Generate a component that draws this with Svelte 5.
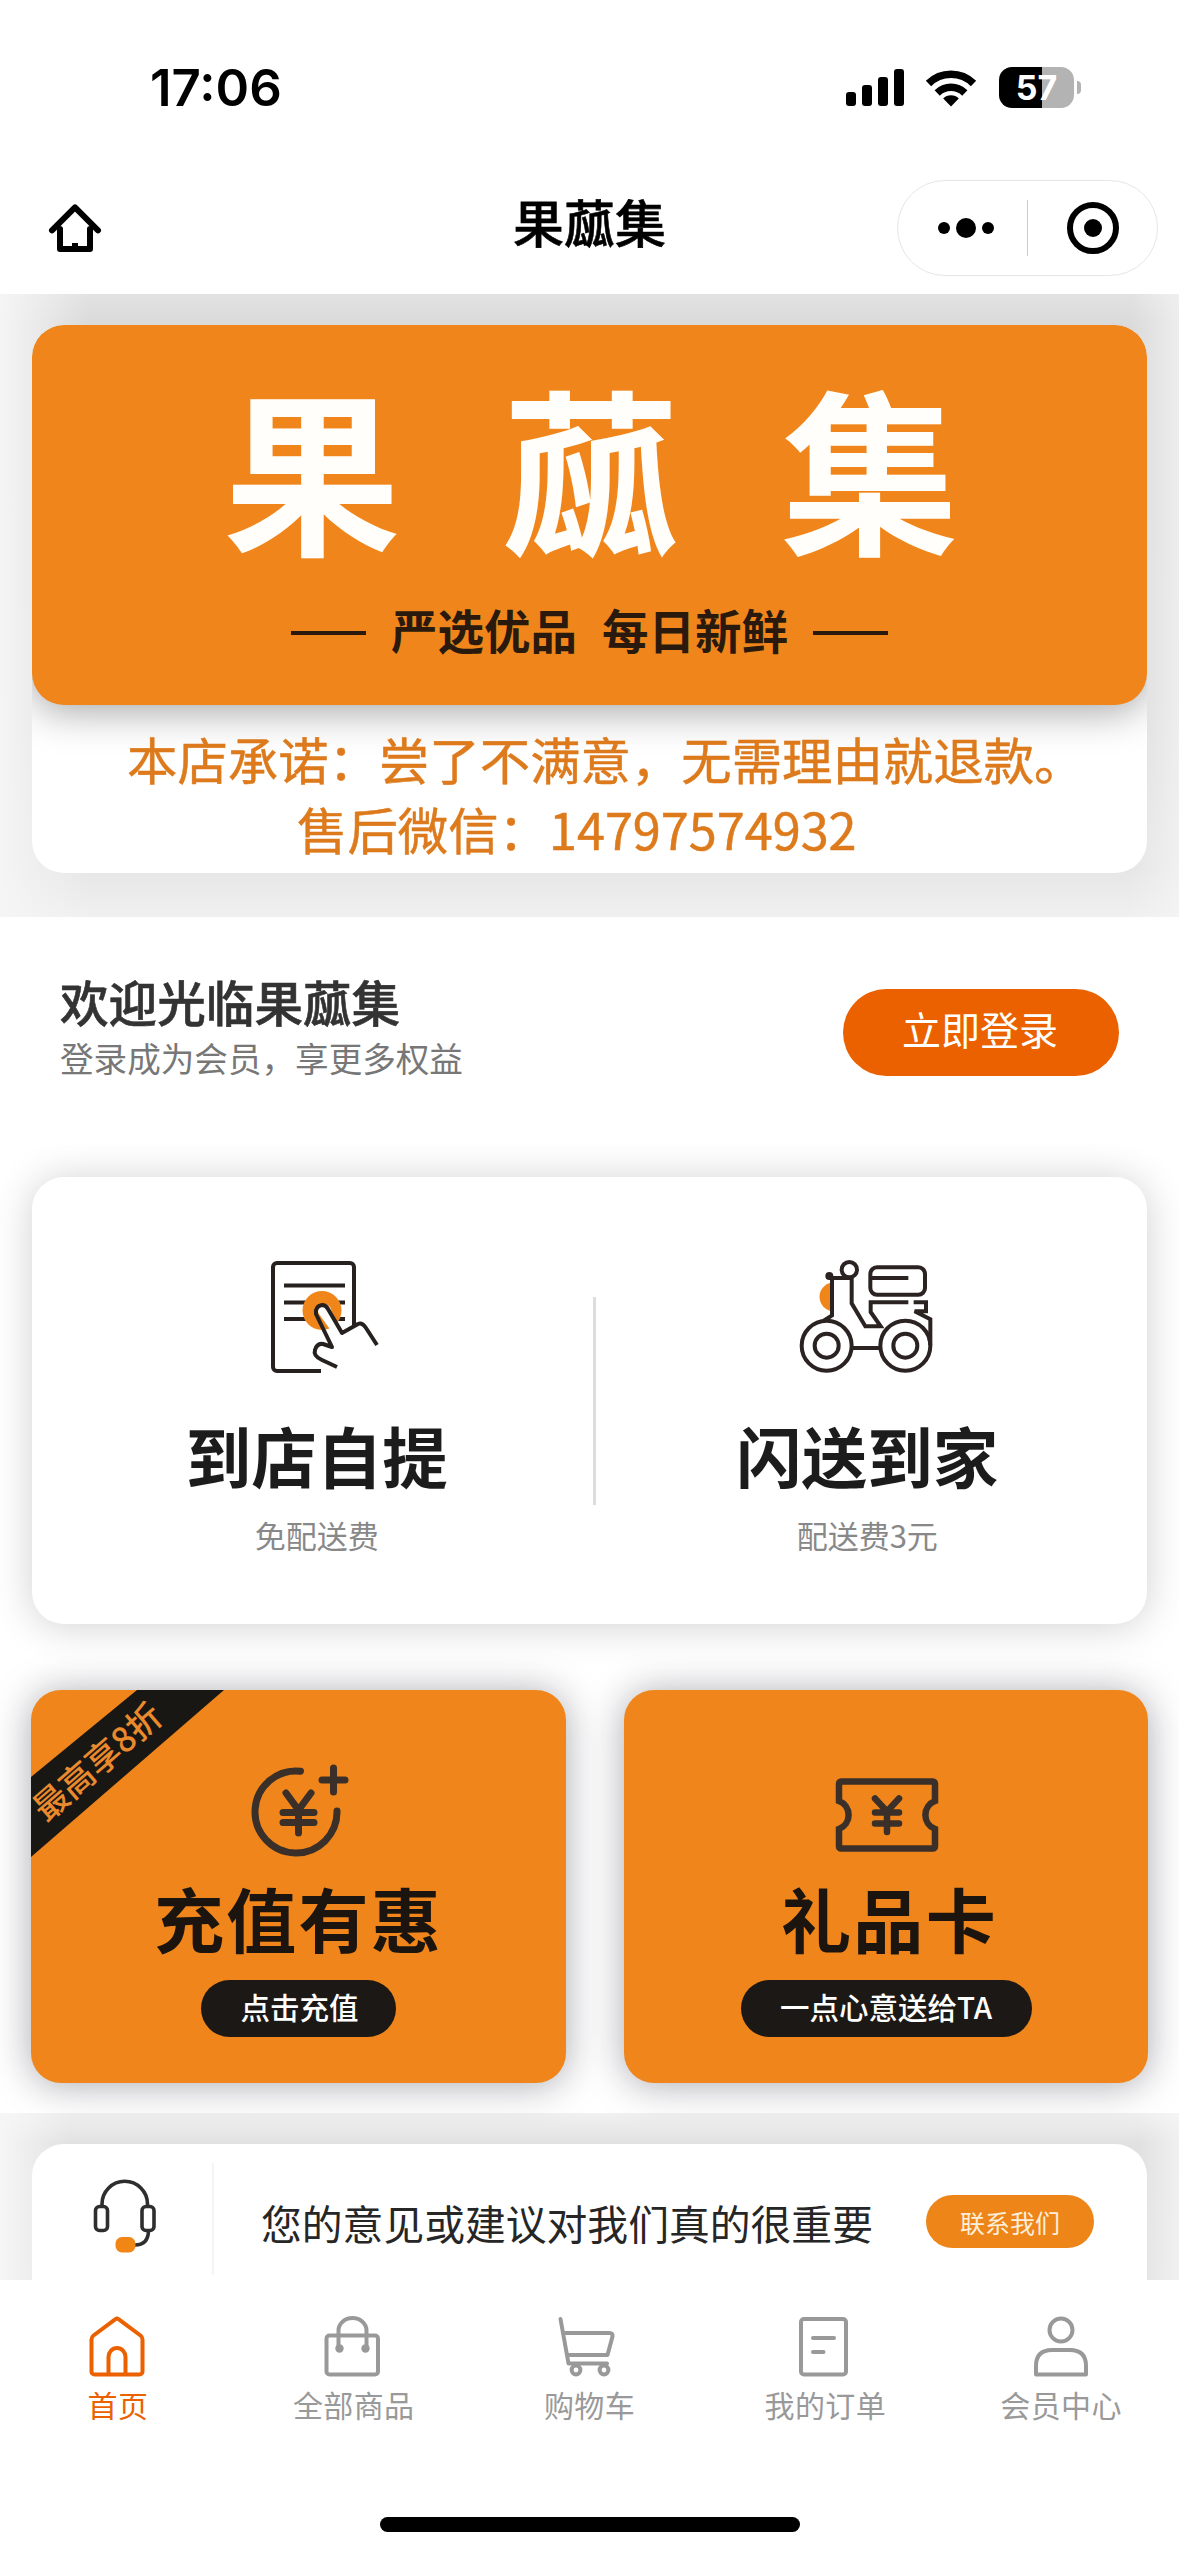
<script>
  const bars = [14, 21, 29, 37];

  const tabs = [
    { id: 'home', label: '首页' },
    { id: 'goods', label: '全部商品' },
    { id: 'cart', label: '购物车' },
    { id: 'orders', label: '我的订单' },
    { id: 'member', label: '会员中心' },
  ];

  let active = 'home';
</script>

<div class="page">
  <header class="status">
    <span class="time">17:06</span>
    <div class="signal">
      {#each bars as height}
        <i style="height: {height}px"></i>
      {/each}
    </div>
    <svg class="wifi" width="52" height="38" viewBox="0 0 52 38">
      <path d="M3.5 14.5a32 32 0 0 1 45 0" fill="none" stroke="#000" stroke-width="7.6" />
      <path d="M12.2 24a19.6 19.6 0 0 1 27.6 0" fill="none" stroke="#000" stroke-width="7.4" />
      <path d="M18.2 29.6a11 11 0 0 1 15.6 0L26 37.5z" />
    </svg>
    <div class="battery"><span>57</span></div>
    <i class="nub"></i>
  </header>

  <nav class="navbar">
    <button class="back" aria-label="home">
      <svg width="80" height="76" viewBox="0 0 240 228">
        <path
          d="M51 121L120 52L189 121M75 117V177H165V117"
          fill="none"
          stroke="#000"
          stroke-width="18"
          stroke-linecap="round"
          stroke-linejoin="round" />
        <path d="M66 114h18v12h-18zM156 114h18v12h-18zM111 159h18v14h-18z" />
      </svg>
    </button>
    <h1>果蓏集</h1>
    <div class="capsule">
      <div class="dots"><i></i><i class="big"></i><i></i></div>
      <span class="rule"></span>
      <div class="target"><i></i></div>
    </div>
  </nav>

  <main>
    <section class="banner">
      <div class="promise-card">
        <div class="brand-card">
          <div class="brand"><span>果</span><span>蓏</span><span>集</span></div>
          <div class="slogan">
            <i></i><span>严选优品</span><span>每日新鲜</span><i></i>
          </div>
        </div>
        <p class="promise">本店承诺：尝了不满意，无需理由就退款。</p>
        <p class="promise wechat">售后微信：14797574932</p>
      </div>
    </section>

    <section class="welcome">
      <div>
        <h2>欢迎光临果蓏集</h2>
        <p>登录成为会员，享更多权益</p>
      </div>
      <button class="login">立即登录</button>
    </section>

    <section class="services-wrap">
      <div class="services">
        <div class="service">
          <svg width="160" height="140" viewBox="0 0 160 140">
            <g fill="none" stroke="#26211f" stroke-width="4">
              <path d="M118 78V17a4 4 0 0 0-4-4H41a4 4 0 0 0-4 4V117a4 4 0 0 0 4 4H85" />
              <path d="M48 35.5H109M48 52.5H109M48 69H109" />
            </g>
            <circle cx="86" cy="60.5" r="19.5" fill="#f0861a" />
            <path
              d="M96 82L83 64a6.5 6.5 0 0 1 11-7L105 83L121 74Q127 71 131 77L141 96V118H101L86 112Q74 96 86 94H96z"
              fill="#fff" />
            <path
              d="M101 117L86 110Q77 106 79 100Q81 93 87 94L96 97L80 64Q79 56 86 55Q90 55 92 59L106 83L122 74Q126 72 130 78L141 95"
              fill="none"
              stroke="#26211f"
              stroke-width="4"
              stroke-linejoin="round" />
          </svg>
          <strong>到店自提</strong>
          <small>免配送费</small>
        </div>
        <i class="split"></i>
        <div class="service delivery">
          <svg width="160" height="140" viewBox="0 0 480 420">
            <path d="M128 98A43 43 0 0 0 128 183z" fill="#f0861a" />
            <g fill="none" stroke="#2b2321" stroke-width="12">
              <circle cx="113" cy="287" r="75" />
              <circle cx="113" cy="287" r="36" />
              <circle cx="349" cy="287" r="75" />
              <circle cx="349" cy="287" r="36" />
              <circle cx="181" cy="59" r="23" />
              <path d="M120 84H188V160L229 229H275L245 186V157H358M129 84V196L103 213M188 294H274" />
              <rect x="244" y="52" width="164" height="82" rx="20" />
              <path d="M244 84H358M374 157H411V184H377L424 208V285L420 250" />
            </g>
            <circle cx="121" cy="78" r="12" fill="#2b2321" />
          </svg>
          <strong>闪送到家</strong>
          <small>配送费3元</small>
        </div>
      </div>
    </section>

    <section class="promos">
      <div class="promo recharge">
        <div class="ribbon"><span>最高享8折</span></div>
        <svg width="80" height="80" viewBox="0 0 80 80">
          <g fill="none" stroke="#3a3029" stroke-linecap="round">
            <path d="M45.5 15.2A41 41 0 1 0 82 55" stroke-width="7" />
            <path d="M31 37L43.5 54L56 37M43.5 54V77M28 56.5H59M28 66.5H59" stroke-width="7" />
            <path d="M78.5 12V36M67 24H90" stroke-width="7" />
          </g>
        </svg>
        <strong>充值有惠</strong>
        <span class="pill">点击充值</span>
      </div>
      <div class="promo gift">
        <svg width="102" height="74" viewBox="0 0 102 74">
          <g fill="none" stroke="#3a3029" stroke-width="6.5">
            <path
              d="M5 3.5H97a2 2 0 0 1 2 2V23A15 15 0 0 0 99 51V68.5a2 2 0 0 1-2 2H5a2 2 0 0 1-2-2V51A15 15 0 0 0 3 23V5.5a2 2 0 0 1 2-2z" />
            <path d="M39 20.5L51 33.5L63 20.5M51 33.5V54M39 34.5H63M39 45.5H63" stroke-linecap="round" stroke-width="6.5" />
          </g>
        </svg>
        <strong>礼品卡</strong>
        <span class="pill">一点心意送给TA</span>
      </div>
    </section>

    <section class="feedback-wrap">
      <div class="feedback">
        <div class="headset">
          <svg width="66" height="76" viewBox="0 0 66 76">
            <g fill="none" stroke="#2e2e2e" stroke-width="3.6">
              <path d="M10 27V24A22.5 22.5 0 0 1 55.5 24V27" />
              <rect x="3.5" y="26.5" width="12" height="24" rx="4" />
              <rect x="50" y="26.5" width="12" height="24" rx="4" />
              <path d="M56.5 51Q56 65 43 65" />
            </g>
            <rect x="23.5" y="57" width="20" height="15.5" rx="6.5" fill="#f28614" />
          </svg>
        </div>
        <p>您的意见或建议对我们真的很重要</p>
        <button>联系我们</button>
      </div>
    </section>
  </main>

  <footer class="tabbar">
    <div class="tabs">
      {#each tabs as tab}
        <button class="tab" class:active={active === tab.id} on:click={() => (active = tab.id)}>
          <svg width="66" height="64" viewBox="0 0 66 64">
            {#if tab.id === 'home'}
              <path d="M7.5 24.5Q7.5 22 9.5 20.5L31.5 4.2Q33 3 34.5 4.2L56.5 20.5Q58.5 22 58.5 24.5V56.5a3 3 0 0 1-3 3H10.500a3 3 0 0 1-3-3z" />
              <path d="M24.5 59V42a8.5 9 0 0 1 17 0V59" />
            {:else if tab.id === 'goods'}
              <rect x="6.5" y="20.5" width="51.5" height="39" rx="3" />
              <path d="M18.5 33V15.500a14 12.500 0 0 1 28 0V33" />
              <circle class="solid" cx="19.5" cy="33.5" r="4.2" />
              <circle class="solid" cx="45.5" cy="33.5" r="4.2" />
            {:else if tab.id === 'cart'}
              <path d="M5.5 4L13.5 48.5H52M9.5 18H54.5Q58 18 57.5 21.5L52.5 40H13.5" />
              <circle cx="21" cy="55" r="4.4" />
              <circle cx="49" cy="55" r="4.4" />
            {:else if tab.id === 'orders'}
              <rect x="10" y="4" width="45" height="55.5" rx="3" />
              <path d="M22 23H43M22 37H32.5" />
            {:else}
              <circle cx="34" cy="15" r="11.5" />
              <path d="M9 59.5V51Q9 35 25 35H43Q59 35 59 51V59.5z" />
            {/if}
          </svg>
          <span>{tab.label}</span>
        </button>
      {/each}
    </div>
    <i class="indicator"></i>
  </footer>
</div>

<style>
  :global(body) {
    background: #fff;
  }
  .page {
    width: 1179px;
    height: 2556px;
    overflow: hidden;
    background: #fff;
    color: #000;
    font-family: 'Noto Sans CJK SC', 'Noto Sans', sans-serif;
  }
  button {
    padding: 0;
    border: none;
    background: none;
    font-family: inherit;
  }
  h1,
  h2,
  p {
    margin: 0;
    font-weight: 400;
  }
  i {
    display: block;
  }
  svg {
    display: block;
    overflow: visible;
  }

  .status {
    display: flex;
    align-items: center;
    height: 175px;
    padding-left: 150px;
  }
  .time {
    width: 696px;
    font: 600 51px/60px Inter, sans-serif;
  }
  .signal {
    display: flex;
    align-items: flex-end;
    gap: 6px;
    height: 37px;
  }
  .signal i {
    width: 10px;
    border-radius: 3px;
    background: #000;
  }
  .wifi {
    margin-left: 21px;
  }
  .battery {
    width: 75px;
    height: 41px;
    margin-left: 22px;
    border-radius: 13px;
    background: linear-gradient(to right, #000 43px, #b3b3b3 43px);
    color: #fff;
    font: 700 34px/41px Inter, sans-serif;
    text-align: center;
  }
  .nub {
    width: 4px;
    height: 13px;
    margin-left: 3px;
    border-radius: 0 5px 5px 0;
    background: #b3b3b3;
  }

  .navbar {
    display: grid;
    grid-template-columns: 1fr auto 1fr;
    height: 119px;
    padding: 0 21px;
    box-sizing: border-box;
  }
  .back {
    width: 80px;
    height: 76px;
    margin: 15px 0 0 14px;
  }
  .navbar h1 {
    font-size: 51px;
    font-weight: 500;
    line-height: 93px;
    -webkit-text-stroke: 0.6px currentColor;
  }
  .capsule {
    display: flex;
    justify-self: end;
    align-items: center;
    width: 261px;
    height: 96px;
    margin-top: 5px;
    border: 1px solid #e6e6e6;
    border-radius: 48px;
    box-sizing: border-box;
  }
  .dots {
    display: flex;
    align-items: center;
    gap: 6px;
    margin-left: 40px;
  }
  .dots i {
    width: 12px;
    height: 12px;
    border-radius: 50%;
    background: #000;
  }
  .dots .big {
    width: 20px;
    height: 20px;
  }
  .rule {
    width: 1px;
    height: 56px;
    margin: 0 39px 0 33px;
    background: #ccc;
  }
  .target {
    display: grid;
    place-items: center;
    width: 40px;
    height: 40px;
    border: 6px solid #000;
    border-radius: 50%;
  }
  .target i {
    width: 18px;
    height: 18px;
    border-radius: 50%;
    background: #000;
  }

  main {
    height: 1986px;
    overflow: hidden;
  }

  .banner {
    height: 623px;
    padding: 31px 32px 0;
    box-sizing: border-box;
    background:
      linear-gradient(to right, #f5f5f5, rgba(245, 245, 245, 0) 90px, rgba(245, 245, 245, 0) 1130px, rgba(245, 245, 245, 0.7)),
      linear-gradient(#e2e2e2, #dadada 30px, #dcdcdc 400px, #e6e6e6 575px, #f0f0f0);
  }
  .promise-card {
    height: 548px;
    border-radius: 32px;
    background: #fff;
    overflow: hidden;
  }
  .brand-card {
    height: 380px;
    padding-top: 40px;
    margin-bottom: 19px;
    border-radius: 32px;
    box-sizing: border-box;
    background: #f0861b;
    box-shadow: 0 6px 40px rgba(0, 0, 0, 0.36);
  }
  .brand {
    display: flex;
    justify-content: center;
    gap: 102px;
    height: 200px;
    padding-left: 3px;
    color: #fffefa;
    font-size: 177px;
    font-weight: 700;
    line-height: 200px;
  }
  .slogan {
    display: flex;
    align-items: center;
    justify-content: center;
    gap: 25px;
    height: 60px;
    margin-top: 34px;
    color: #2a1a0e;
    font-size: 46.5px;
    font-weight: 700;
    line-height: 60px;
  }
  .slogan i {
    width: 75px;
    height: 4px;
    margin-top: 7px;
    background: #2a1a0e;
  }
  .promise {
    margin-left: 95px;
    color: #dd7a1c;
    font-size: 50.4px;
    line-height: 70px;
    white-space: nowrap;
    -webkit-text-stroke: 0.5px currentColor;
  }
  .wechat {
    margin-left: 265px;
  }

  .welcome {
    display: flex;
    justify-content: space-between;
    height: 228px;
    padding: 0 60px;
    box-sizing: border-box;
  }
  .welcome h2 {
    margin-top: 52px;
    color: #333;
    font-size: 48.6px;
    font-weight: 500;
    line-height: 64px;
    -webkit-text-stroke: 0.6px currentColor;
  }
  .welcome p {
    margin-top: 3px;
    color: #777;
    font-size: 33.6px;
    line-height: 44px;
  }
  .login {
    width: 276px;
    height: 87px;
    margin-top: 72px;
    padding: 0 2px 8px 0;
    border-radius: 44px;
    background: #eb6100;
    color: #fff;
    font-size: 39px;
    line-height: 79px;
  }

  .services-wrap {
    padding: 32px 32px 0;
    overflow: hidden;
  }
  .services {
    display: flex;
    height: 447px;
    margin-bottom: 66px;
    border-radius: 32px;
    background: #fff;
    box-shadow: 0 2px 40px rgba(0, 0, 0, 0.19);
  }
  .service {
    display: flex;
    flex-direction: column;
    align-items: center;
    width: 562px;
    padding: 73px 0 0 8px;
    box-sizing: border-box;
  }
  .service svg {
    margin-left: -2px;
  }
  .service strong {
    margin-top: 17px;
    color: #1c1c1c;
    font-size: 65.5px;
    font-weight: 700;
    line-height: 96px;
  }
  .service small {
    margin-top: 9px;
    color: #888;
    font-size: 31px;
    line-height: 46px;
  }
  .delivery {
    width: 552px;
    padding-right: 8px;
    padding-left: 0;
  }
  .delivery svg {
    margin-left: 4px;
  }
  .split {
    width: 3px;
    height: 208px;
    margin-top: 120px;
    margin-left: -1px;
    background: #ddd;
  }

  .promos {
    display: flex;
    justify-content: space-between;
    height: 423px;
    padding: 0 31px;
    box-sizing: border-box;
  }
  .promo {
    position: relative;
    display: flex;
    flex-direction: column;
    align-items: center;
    width: 535px;
    height: 393px;
    border-radius: 30px;
    box-sizing: border-box;
    background: #f0861b;
    box-shadow: 0 2px 38px rgba(20, 20, 40, 0.36);
  }
  .gift {
    width: 524px;
  }
  .promo strong {
    color: #1c140e;
    font-size: 70px;
    font-weight: 700;
    letter-spacing: 2.3px;
    line-height: 100px;
  }
  .promo svg {
    flex: none;
  }
  .recharge svg {
    margin: 66px 0 0 -7px;
  }
  .recharge strong {
    margin-top: 32px;
  }
  .gift svg {
    margin: 88px 0 0 2px;
  }
  .gift strong {
    margin-top: 16px;
    margin-left: 7px;
  }
  .pill {
    width: 195px;
    height: 57px;
    margin-top: 12px;
    border-radius: 29px;
    background: #1c1815;
    color: #fff;
    font-size: 29.5px;
    font-weight: 500;
    line-height: 53px;
    text-align: center;
    white-space: nowrap;
  }
  .recharge .pill {
    text-indent: 2px;
  }
  .gift .pill {
    width: 291px;
  }
  .ribbon {
    position: absolute;
    top: 0;
    left: 0;
    width: 193px;
    height: 167px;
    background: #191714;
    clip-path: polygon(106px 0, 100% 0, 0 100%, 0 87px);
  }
  .ribbon span {
    position: absolute;
    left: -35px;
    top: 46px;
    width: 200px;
    color: #ea8a2c;
    font-size: 34.5px;
    font-weight: 500;
    line-height: 48px;
    text-align: center;
    transform: rotate(-41deg);
  }

  .feedback-wrap {
    height: 167px;
    padding: 31px 32px 0;
    box-sizing: border-box;
    background:
      linear-gradient(to right, #f6f6f6, rgba(246, 246, 246, 0) 70px, rgba(246, 246, 246, 0) 1140px, rgba(246, 246, 246, 0.7)),
      linear-gradient(#f1f1f1, #e1e1e1 31px, #e4e4e4);
  }
  .feedback {
    display: flex;
    height: 180px;
    border-radius: 32px;
    background: #fff;
  }
  .headset {
    width: 182px;
    height: 112px;
    margin-top: 19px;
    padding: 17px 0 0 60px;
    border-right: 2px solid #f5f5f5;
    box-sizing: border-box;
  }
  .feedback p {
    width: 663px;
    padding-left: 47px;
    box-sizing: border-box;
    color: #262626;
    font-size: 40.8px;
    line-height: 157px;
    white-space: nowrap;
  }
  .feedback button {
    width: 168px;
    height: 53px;
    margin: 51px 0 0 49px;
    border-radius: 27px;
    background: #ed8519;
    color: #fdeed9;
    font-size: 25px;
    line-height: 50px;
  }

  .tabbar {
    height: 276px;
    background: #fff;
  }
  .tabs {
    display: flex;
    height: 237px;
  }
  .tab {
    display: flex;
    flex: 1;
    flex-direction: column;
    align-items: center;
    padding-top: 35px;
    color: #999;
  }
  .tab svg {
    margin-left: -2px;
    fill: none;
    stroke: currentColor;
    stroke-width: 4;
    stroke-linecap: round;
    stroke-linejoin: round;
  }
  .tab .solid {
    fill: currentColor;
    stroke: none;
  }
  .tab span {
    margin-top: 4px;
    font-size: 30px;
    line-height: 42px;
    letter-spacing: 0.4px;
  }
  .tab.active {
    color: #eb6100;
  }
  .indicator {
    width: 420px;
    height: 15px;
    margin: 0 auto;
    border-radius: 8px;
    background: #000;
  }
</style>
